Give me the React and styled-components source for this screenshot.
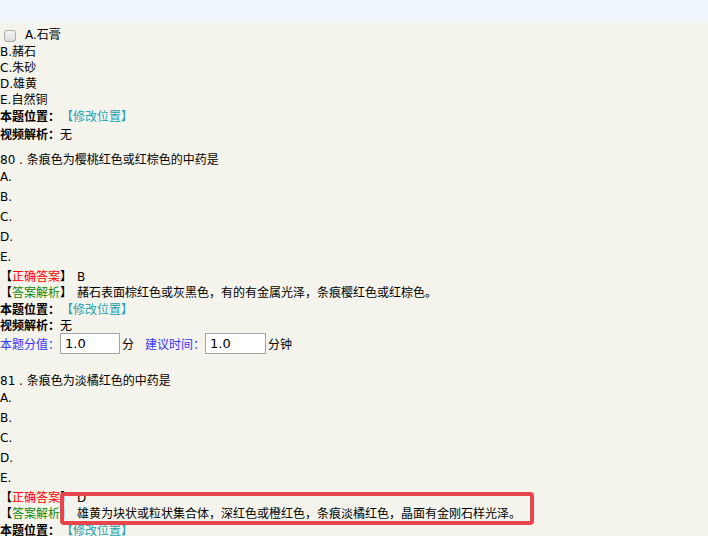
import React from 'react'
import styled, { createGlobalStyle } from 'styled-components'

const GlobalStyle = createGlobalStyle`
html, body {
  margin: 0;
  padding: 0;
  height: 100%;
  overflow: hidden;
  background: #f5f4ec;
}
body {
  font-family: "DejaVu Sans", "Noto Sans CJK SC", sans-serif;
  font-size: 12px;
  color: #000;
}
`

const TopBar = styled.div`
height: 23px;
background: #eef5fd;
`

const Page = styled.div`
padding-top: 3px;
`

const CheckRow = styled.div`
display: flex;
align-items: center;
height: 17px;
line-height: 17px;
margin-top: 1px;
`

const Check = styled.span`
display: inline-block;
box-sizing: border-box;
width: 12px;
height: 12px;
margin: 0 9px 0 4px;
border: 1px solid #a9a9a9;
border-radius: 3px;
background: linear-gradient(#f4f4f4, #dedede);
`

const Line = styled.div`
height: 16px;
line-height: 16px;
white-space: nowrap;
margin-top: ${p => p.$mt || 0}px;
`

const Label = styled.b`
font-family: "Noto Sans CJK SC", sans-serif;
font-weight: 700;
`

const Link = styled.span`
color: #23a3b2;
margin-left: 7px;
`

const Bracket = styled.span`
color: ${p => p.$color};
`

const Question = styled.div`
margin-top: ${p => p.$mt}px;
`

const Title = styled.div`
height: 18px;
line-height: 18px;
white-space: nowrap;
`

const Option = styled.div`
height: 20px;
line-height: 16px;
`

const AnswerText = styled.span`
margin-left: 5px;
`

const ScoreRow = styled.div`
display: flex;
align-items: center;
height: 21px;
white-space: nowrap;
`

const Blue = styled.span`
color: #3535f5;
margin-left: ${p => p.$ml || 0}px;
`

const Input = styled.div`
box-sizing: border-box;
width: ${p => p.$w}px;
height: 21px;
border: 1px solid #a3a3a3;
background: #fff;
padding: 0 4px;
line-height: 19px;
font-size: 13px;
margin-right: 2px;
`

const Annotated = styled.div`
position: relative;
`

const RedBox = styled.div`
position: absolute;
left: 60px;
top: 2px;
width: 474px;
height: 33px;
box-sizing: border-box;
border: 4px solid #e6464b;
border-radius: 4px;
pointer-events: none;
`

const Meta = ({ children }) => (
  <>
    <Line><Label>本题位置：</Label><Link>【修改位置】</Link></Line>
    {children}
  </>
)

const Answer = ({ correct, analysis }) => (
  <>
    <Line><Bracket>【</Bracket><Bracket $color="#f00">正确答案</Bracket><Bracket>】</Bracket><AnswerText>{correct}</AnswerText></Line>
    <Line><Bracket>【</Bracket><Bracket $color="#13870f">答案解析</Bracket><Bracket>】</Bracket><AnswerText>{analysis}</AnswerText></Line>
  </>
)

const Options = () => (
  <>
    {['A.', 'B.', 'C.', 'D.', 'E.'].map(o => <Option key={o}>{o}</Option>)}
  </>
)

const App = () => {
  return (
    <>
      <GlobalStyle />
      <TopBar />
      <Page>
        <CheckRow><Check />A.石膏</CheckRow>
        <Line>B.赭石</Line>
        <Line>C.朱砂</Line>
        <Line>D.雄黄</Line>
        <Line>E.自然铜</Line>
        <Meta>
          <Line $mt={2}><Label>视频解析：</Label>无</Line>
        </Meta>

        <Question $mt={9}>
          <Title>80 . 条痕色为樱桃红色或红棕色的中药是</Title>
          <Options />
          <Answer correct="B" analysis="赭石表面棕红色或灰黑色，有的有金属光泽，条痕樱红色或红棕色。" />
          <Meta>
            <Line><Label>视频解析：</Label>无</Line>
          </Meta>
          <ScoreRow>
            <Blue>本题分值：</Blue>
            <Input $w={60}>1.0</Input>
            <span>分</span>
            <Blue $ml={11}>建议时间：</Blue>
            <Input $w={61}>1.0</Input>
            <span>分钟</span>
          </ScoreRow>
        </Question>

        <Question $mt={18}>
          <Title>81 . 条痕色为淡橘红色的中药是</Title>
          <Options />
          <Annotated>
            <Answer correct="D" analysis="雄黄为块状或粒状集合体，深红色或橙红色，条痕淡橘红色，晶面有金刚石样光泽。" />
            <RedBox />
          </Annotated>
          <Meta />
        </Question>
      </Page>
    </>
  )
}

export default App
